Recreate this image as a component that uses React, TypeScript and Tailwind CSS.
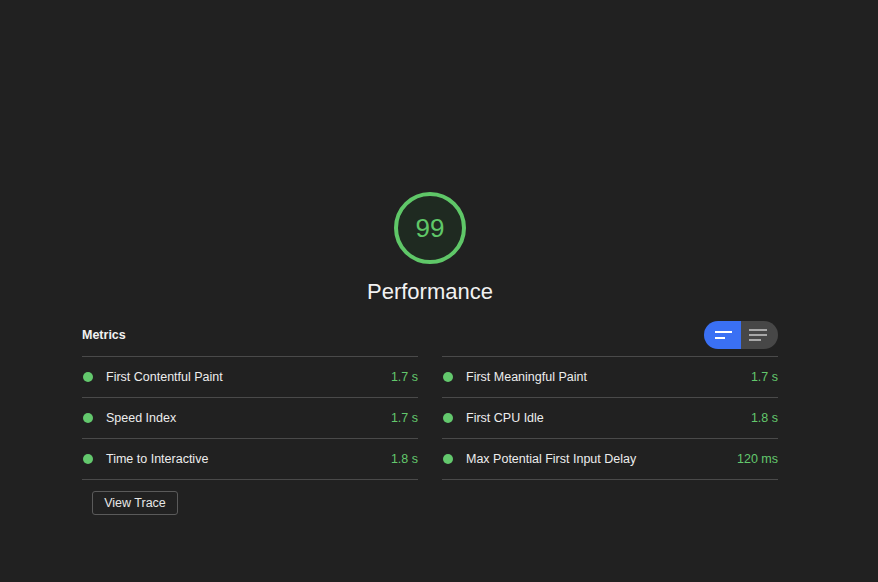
import React from 'react';

type Metric = { label: string; value: string };

const left: Metric[] = [
  { label: 'First Contentful Paint', value: '1.7 s' },
  { label: 'Speed Index', value: '1.7 s' },
  { label: 'Time to Interactive', value: '1.8 s' },
];

const right: Metric[] = [
  { label: 'First Meaningful Paint', value: '1.7 s' },
  { label: 'First CPU Idle', value: '1.8 s' },
  { label: 'Max Potential First Input Delay', value: '120 ms' },
];

const MetricColumn = ({ items }: { items: Metric[] }) => (
  <div className="flex-1 border-t border-[#4a4a4a]">
    {items.map((m) => (
      <div key={m.label} className="h-[41px] flex items-center border-b border-[#4a4a4a] pl-[1px]">
        <span className="w-[10px] h-[10px] rounded-full bg-[#63c86d] shrink-0" />
        <span className="ml-[13px] flex-1 text-[12.5px] text-[#ededed]">{m.label}</span>
        <span className="text-[12.5px] text-[#63c86d]">{m.value}</span>
      </div>
    ))}
  </div>
);

const Gauge = ({ score }: { score: number }) => (
  <div className="relative w-[72px] h-[72px]">
    <svg width="72" height="72" viewBox="0 0 72 72" className="absolute inset-0">
      <circle cx="36" cy="36" r="34" fill="#1f2a21" stroke="#5fc768" strokeWidth="4" />
    </svg>
    <div className="absolute inset-0 flex items-center justify-center text-[26px] text-[#5fc768]">
      {score}
    </div>
  </div>
);

export default function App() {
  return (
    <div className="w-[878px] h-[582px] bg-[#212121] font-['Liberation_Sans',Arial,sans-serif] overflow-hidden">
      <div className="w-[696px] ml-[82px] pt-[192px] flex flex-col">
        <div className="flex flex-col items-center">
          <Gauge score={99} />
          <div className="mt-[14px] h-[28px] leading-[28px] text-[22px] text-[#f2f2f2]">Performance</div>
        </div>

        <div className="mt-[15px] flex items-center justify-between h-[28px]">
          <span className="text-[12.5px] font-bold text-[#f2f2f2]">Metrics</span>
          <div className="flex h-[28px] w-[74px] rounded-full overflow-hidden">
            <div className="w-[37px] bg-[#3a70f4] flex flex-col justify-center pl-[11px] gap-[4px]">
              <span className="block h-[2px] w-[17px] bg-white" />
              <span className="block h-[2px] w-[10px] bg-white" />
            </div>
            <div className="w-[37px] bg-[#474747] flex flex-col justify-center pl-[8px] gap-[3px]">
              <span className="block h-[2px] w-[18px] bg-[#a8a8a8]" />
              <span className="block h-[2px] w-[18px] bg-[#a8a8a8]" />
              <span className="block h-[2px] w-[12px] bg-[#a8a8a8]" />
            </div>
          </div>
        </div>

        <div className="mt-[7px] flex gap-[24px]">
          <MetricColumn items={left} />
          <MetricColumn items={right} />
        </div>

        <div className="mt-[10px] ml-[10px]">
          <button className="h-[24px] w-[86px] border border-[#5a5a5a] rounded-[3px] text-[12.5px] text-[#e6e6e6] bg-transparent">
            View Trace
          </button>
        </div>
      </div>
    </div>
  );
}
